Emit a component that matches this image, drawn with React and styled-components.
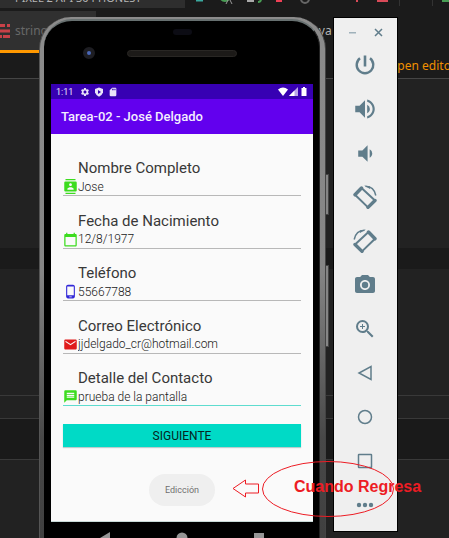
import React from "react";
import styled, { createGlobalStyle } from "styled-components";
import {
  MdContacts, MdCalendarToday, MdPhoneAndroid, MdEmail, MdMessage,
  MdVolumeUp, MdVolumeDown, MdPhotoCamera, MdZoomIn,
  MdSettings, MdSdCard,
} from "react-icons/md";

const Global = createGlobalStyle`
  * { box-sizing: border-box; }
  body { margin: 0; background: #222; font-family: Roboto, sans-serif; overflow: hidden; }
  button { border: 0; padding: 0; background: none; font: inherit; color: inherit; }
  svg { display: block; }
`;

const Desktop = styled.main`
  position: relative;
  height: 100vh;
  overflow: hidden;
`;

/* ---------- editor behind the emulator ---------- */
const Editor = styled.div`
  display: flex;
  flex-direction: column;
  min-height: 100%;
  background: #222;
  font-family: "Noto Sans", sans-serif;
`;
const TopBar = styled.header`
  display: flex;
  justify-content: space-between;
  align-items: flex-end;
  height: 8px;
  overflow: hidden;
  background: #1b1b1b;
`;
const DeviceSelect = styled.button`
  display: flex;
  align-items: flex-end;
  width: 185px;
  height: 8px;
  padding: 0 0 5px 15px;
  background: #2e2e2e;
  color: #b4b4b4;
  font-size: 11px;
  line-height: 11px;
  white-space: nowrap;
`;
const TabStrip = styled.nav`
  display: flex;
  justify-content: space-between;
  height: 45px;
  padding-top: 3px;
  background: #1b1b1b;
`;
const Tab = styled.a`
  display: flex;
  align-items: center;
  gap: 5px;
  width: ${(p) => p.$width};
  padding-bottom: ${(p) => (p.$active ? "0" : "3px")};
  border-bottom: ${(p) => (p.$active ? "3px solid #ff9800" : "0")};
  background: ${(p) => (p.$active ? "#303030" : "transparent")};
  color: ${(p) => (p.$active ? "#686868" : "#b4b4b4")};
  font-size: 12px;
  text-decoration: none;
`;
const Notice = styled.div`
  display: flex;
  justify-content: flex-end;
  align-items: center;
  height: 26px;
  border-bottom: 1px solid #454545;
  background: #1b1b1b;
`;
const NoticeLink = styled.a`
  width: 61px;
  overflow: hidden;
  color: #f09000;
  font-size: 12px;
  text-decoration: none;
  white-space: nowrap;
`;
const Pane = styled.div`
  height: ${(p) => p.$height};
  background: ${(p) => (p.$dark ? "#1a1a1a" : "#222")};
  border-bottom: ${(p) => (p.$line ? "1px solid #393939" : "0")};
`;

/* ---------- emulator windows ---------- */
const Windows = styled.div`
  position: absolute;
  inset: 17px 0 0;
  display: flex;
  align-items: flex-start;
  gap: 4px;
  padding-left: 39px;
`;
const PhoneShell = styled.section`
  display: flex;
  align-items: flex-start;
  flex: 0 0 290px;
`;
const Frame = styled.div`
  flex: 1;
  padding: 2px 5px 0 4px;
  border-radius: 32px 32px 0 0;
  background: linear-gradient(#8c8c8c, #858585 45%, #484848 75%, #3c3c3c);
  border-left: 1px solid #555;
  border-right: 1px solid #444;
`;
const Bezel = styled.div`
  min-height: 560px;
  padding: 2px 6px 0 7px;
  border-radius: 28px 28px 0 0;
  background: #000;
  border-top: 2px solid #677070;
  border-right: 1px solid #222;
`;
const SideKeys = styled.div`
  display: flex;
  flex-direction: column;
  gap: 50px;
  width: 3px;
  padding-top: 157px;
`;
const SideKey = styled.div`
  height: ${(p) => p.$height};
  background: #858585;
  border: 1px solid #444;
  border-left: 0;
`;
const Earpiece = styled.div`
  display: grid;
  grid-template: 18px 24px 1fr / 1fr 110px 1fr;
  align-items: center;
  justify-items: center;
  height: 61px;
`;
const Sensor = styled.div`
  grid-area: 1 / 2;
  width: 19px;
  height: 6px;
  border-radius: 3px;
  background: #0c0c14;
`;
const Camera = styled.div`
  grid-area: 2 / 1;
  justify-self: start;
  width: 12px;
  height: 12px;
  margin-left: 32px;
  border: 4px solid #1d1d22;
  border-radius: 50%;
  background: #4a68b8;
`;
const Speaker = styled.div`
  grid-area: 2 / 2;
  width: 100%;
  height: 7px;
  border: 1px solid #292724;
  border-radius: 4px;
  background: #1c1a18;
`;
const Screen = styled.div`
  background: #fafafa;
  border-bottom: 1px solid #c8dad8;
`;
const StatusBar = styled.div`
  display: flex;
  align-items: center;
  justify-content: space-between;
  height: 15px;
  padding: 0 5px;
  background: #3700b3;
  color: #e8e2f8;
  font-size: 9px;
`;
const StatusGroup = styled.div`
  display: flex;
  align-items: center;
  gap: ${(p) => p.$gap};
`;
const Clock = styled.span`
  margin-right: 3px;
`;
const AppBar = styled.h1`
  margin: 0;
  height: 35px;
  padding-left: 10px;
  background: #6200ee;
  color: #f4eeff;
  font-size: 13px;
  font-weight: 500;
  line-height: 36px;
`;
const Form = styled.form`
  display: flex;
  flex-direction: column;
  padding: 10px 12px 0;
`;
const Fields = styled.div`
  display: grid;
  grid-auto-rows: 1fr;
  min-height: 262px;
`;
const Field = styled.div`
  display: flex;
  flex-direction: column;
  justify-content: flex-end;
`;
const FieldLabel = styled.label`
  padding-left: 15px;
  color: #383838;
  font-size: 15px;
  line-height: 20px;
`;
const FieldLine = styled.div`
  display: flex;
  align-items: center;
  height: 18px;
  border-bottom: 1px solid ${(p) => (p.$focused ? "#5edccf" : "#b8b8b8")};
  color: ${(p) => p.$color};
`;
const FieldInput = styled.input`
  flex: 1;
  min-width: 0;
  padding: 0;
  border: 0;
  outline: 0;
  background: transparent;
  color: #202020;
  font: 300 12px Roboto, sans-serif;
`;
const NextButton = styled.button`
  height: 23px;
  margin-top: 18px;
  background: #00dac6;
  box-shadow: 0 1px 1px #bcc;
  color: #062420;
  font-size: 12px;
`;
const ToastArea = styled.div`
  display: flex;
  justify-content: center;
  padding: 27px 0 15px;
`;
const Toast = styled.output`
  padding: 0 16px;
  border-radius: 16px;
  background: #efefef;
  color: #707070;
  font-size: 9px;
  line-height: 32px;
`;
const NavBar = styled.nav`
  display: grid;
  grid-template-columns: repeat(3, 1fr);
  justify-items: center;
  padding: 9px 16px 0;
  color: #959595;
`;

const ToolWindow = styled.aside`
  flex: 0 0 65px;
  border: 1px solid #000;
  background: #efefef;
  color: #607d8b;
  padding-bottom: 4px;
`;
const TitleButtons = styled.div`
  display: flex;
  align-items: center;
  justify-content: center;
  gap: 17px;
  height: 25px;
  padding-top: 3px;
`;
const ToolList = styled.div`
  display: grid;
  grid-auto-rows: 44px;
  padding-right: 1px;
`;
const Tool = styled.button`
  display: grid;
  place-items: center;
`;

/* ---------- red mark-up ---------- */
const Markup = styled.div`
  position: absolute;
  left: 232px;
  top: 459px;
  display: grid;
  align-items: center;
  color: #ed1c24;
  pointer-events: none;
  & > * { grid-area: 1 / 1; }
`;
const MarkupText = styled.strong`
  padding: 0 0 4px 62px;
  font: bold 16px "Liberation Sans", sans-serif;
  white-space: nowrap;
`;

const RotateIcon = ({ right }) => (
  <svg width="24" height="24" viewBox="0 0 24 24" fill="none" stroke="currentColor">
    <g transform={right ? "translate(24 0) scale(-1 1)" : undefined}>
      <path d="M8.500 3 L2 9.700 L15 22.400 L22 15.500 Z" strokeWidth="2" strokeLinejoin="round" />
      <path d="M8.500 3 L2 9.700 M15 22.400 L22 15.500" strokeWidth="3.400" strokeLinecap="round" />
      <path d="M12.500 1.300 Q21 1.500 22.800 10.500" strokeWidth="1.500" />
      <path d="M11 .5 L17 4 V1.500 Z" fill="currentColor" stroke="none" />
    </g>
  </svg>
);
const PowerIcon = () => (
  <svg width="24" height="24" viewBox="0 0 24 24" fill="none" stroke="currentColor" strokeWidth="2.400">
    <path d="M12 2.500v11" strokeWidth="2.600" />
    <path d="M7 5.300a8.300 8.300 0 1 0 10 0" />
  </svg>
);
const Shape = ({ children }) => (
  <svg width="18" height="18" viewBox="0 0 18 18" fill="none" stroke="currentColor" strokeWidth="1.5">
    {children}
  </svg>
);

const tools = [
  ["Power", <PowerIcon />],
  ["Volume up", <MdVolumeUp size={26} />],
  ["Volume down", <MdVolumeDown size={25} />],
  ["Rotate left", <RotateIcon />],
  ["Rotate right", <RotateIcon right />],
  ["Take screenshot", <MdPhotoCamera size={24} />],
  ["Zoom", <MdZoomIn size={24} />],
  ["Back", <Shape><path d="M15 2.5 V15.5 L3 9 Z" /></Shape>],
  ["Home", <Shape><circle cx="9" cy="9" r="6.5" /></Shape>],
  ["Overview", <Shape><rect x="2.5" y="2.5" width="13" height="13" rx=".5" /></Shape>],
  ["More", <Shape><g fill="currentColor" stroke="none"><circle cx="3" cy="9" r="2.2" /><circle cx="9" cy="9" r="2.2" /><circle cx="15" cy="9" r="2.2" /></g></Shape>],
];

const fields = [
  { id: "name", label: "Nombre Completo", value: "Jose", icon: MdContacts, color: "#3ddc1f" },
  { id: "birth", label: "Fecha de Nacimiento", value: "12/8/1977", icon: MdCalendarToday, color: "#3ddc1f" },
  { id: "phone", label: "Teléfono", value: "55667788", icon: MdPhoneAndroid, color: "#3228d8" },
  { id: "mail", label: "Correo Electrónico", value: "jjdelgado_cr@hotmail.com", icon: MdEmail, color: "#e01b1b" },
  { id: "detail", label: "Detalle del Contacto", value: "prueba de la pantalla", icon: MdMessage, color: "#3ddc1f", focused: true },
];

const EditorView = () => (
  <Editor>
    <TopBar>
      <DeviceSelect>PIXEL 2 API 30 PHONEST</DeviceSelect>
      <svg width="255" height="8" viewBox="194 0 255 8" fill="none" strokeWidth="2">
        <path d="M196 0h7" stroke="#3aa99f" strokeWidth="3" />
        <path d="M221 -1a5 5 0 0 0 8 0" stroke="#499c54" />
        <path d="M226 4l3-6 3 6" stroke="#999" strokeWidth="1" />
        <path d="M247 1h7" stroke="#aaa" />
        <path d="M258 2q3 0 3-3" stroke="#499c54" />
        <path d="M276 0h6" stroke="#ef4056" strokeWidth="4" />
        <path d="M301 -1a4 4 0 0 0 8 0" stroke="#666" />
        <path d="M357 -1v3M377 1h11" stroke="#d94a58" />
        <path d="M399.500 0v6M432.500 0v6" stroke="#333" strokeWidth="1" />
        <path d="M443 -1v2h8" stroke="#499c54" />
      </svg>
    </TopBar>
    <TabStrip>
      <Tab href="#strings" $active $width="96px">
        <svg width="10" height="14" viewBox="0 0 10 14" fill="#c94148">
          <path d="M0 0h5v3H0zM7 0h3v3H7zM0 5.500h10v3H0zM0 11h2v3H0zM3 11h7v3H3z" />
        </svg>
        strings
      </Tab>
      <Tab href="#main" $width="140px">java</Tab>
    </TabStrip>
    <Notice><NoticeLink href="#editor">Open editor</NoticeLink></Notice>
    <Pane $height="169px" />
    <Pane $height="21px" $dark />
    <Pane $height="127px" $line />
    <Pane $height="23px" $line />
    <Pane $height="41px" $dark $line />
  </Editor>
);

const Phone = () => (
  <PhoneShell>
    <Frame>
      <Bezel>
        <Earpiece><Sensor /><Camera /><Speaker /></Earpiece>
        <Screen>
          <StatusBar>
            <StatusGroup $gap="4px">
              <Clock>1:11</Clock>
              <MdSettings size={10} />
              <svg width="10" height="10" viewBox="0 0 10 10">
                <path d="M5 .5 9 2v3.500Q8 8.500 5 9.700 2 8.500 1 5.500V2z" fill="currentColor" />
                <path d="M4 3v4l3-2z" fill="#3700b3" />
              </svg>
              <MdSdCard size={10} />
            </StatusGroup>
            <StatusGroup $gap="1px">
              <svg width="10" height="9" viewBox="0 0 10 9"><path d="M0 2.500Q5-1.500 10 2.500L5 9z" fill="#fff" /></svg>
              <svg width="9" height="9" viewBox="0 0 9 9"><path d="M9 0v9H0z" fill="#b9a5e6" /><path d="M5.500 3.500V9H0z" fill="#fff" /></svg>
              <svg width="9" height="9" viewBox="0 0 9 9"><path d="M3 1h1V0h2v1h1.500v8h-5V1z" fill="#fff" /></svg>
            </StatusGroup>
          </StatusBar>
          <AppBar>Tarea-02 - José Delgado</AppBar>
          <Form>
            <Fields>
              {fields.map(({ id, label, value, icon: Icon, color, focused }) => (
                <Field key={id}>
                  <FieldLabel htmlFor={id}>{label}</FieldLabel>
                  <FieldLine $color={color} $focused={focused}>
                    <Icon size={15} />
                    <FieldInput id={id} defaultValue={value} />
                  </FieldLine>
                </Field>
              ))}
            </Fields>
            <NextButton type="button">SIGUIENTE</NextButton>
          </Form>
          <ToastArea><Toast>Edicción</Toast></ToastArea>
        </Screen>
        <NavBar>
          <svg width="16" height="14" viewBox="0 0 16 14" fill="currentColor"><path d="M13 1v12L3 7z" /></svg>
          <svg width="14" height="14" viewBox="0 0 14 14" fill="currentColor"><circle cx="7" cy="7" r="5.500" /></svg>
          <svg width="14" height="14" viewBox="0 0 14 14" fill="currentColor"><path d="M2 2h10v10H2z" /></svg>
        </NavBar>
      </Bezel>
    </Frame>
    <SideKeys><SideKey $height="41px" /><SideKey $height="82px" /></SideKeys>
  </PhoneShell>
);

export default function App() {
  return (
    <>
      <Global />
      <Desktop>
        <EditorView />
        <Windows>
          <Phone />
          <ToolWindow>
            <TitleButtons>
              <button aria-label="Minimize"><svg width="9" height="9" viewBox="0 0 9 9"><path d="M1 4h7v1.500H1z" fill="#9fb1ba" /></svg></button>
              <button aria-label="Close"><svg width="9" height="9" viewBox="0 0 9 9"><path d="M1 1l7 7M8 1L1 8" stroke="currentColor" strokeWidth="1.500" /></svg></button>
            </TitleButtons>
            <ToolList>
              {tools.map(([name, icon]) => <Tool key={name} aria-label={name}>{icon}</Tool>)}
            </ToolList>
          </ToolWindow>
        </Windows>
        <Markup>
          <svg width="164" height="60" viewBox="0 0 164 60" fill="none" stroke="currentColor">
            <ellipse cx="96" cy="30" rx="65.500" ry="27.500" />
            <path d="M1 29.500 13.500 21v4h13v9h-13v4z" />
          </svg>
          <MarkupText>Cuando Regresa</MarkupText>
        </Markup>
      </Desktop>
    </>
  );
}
